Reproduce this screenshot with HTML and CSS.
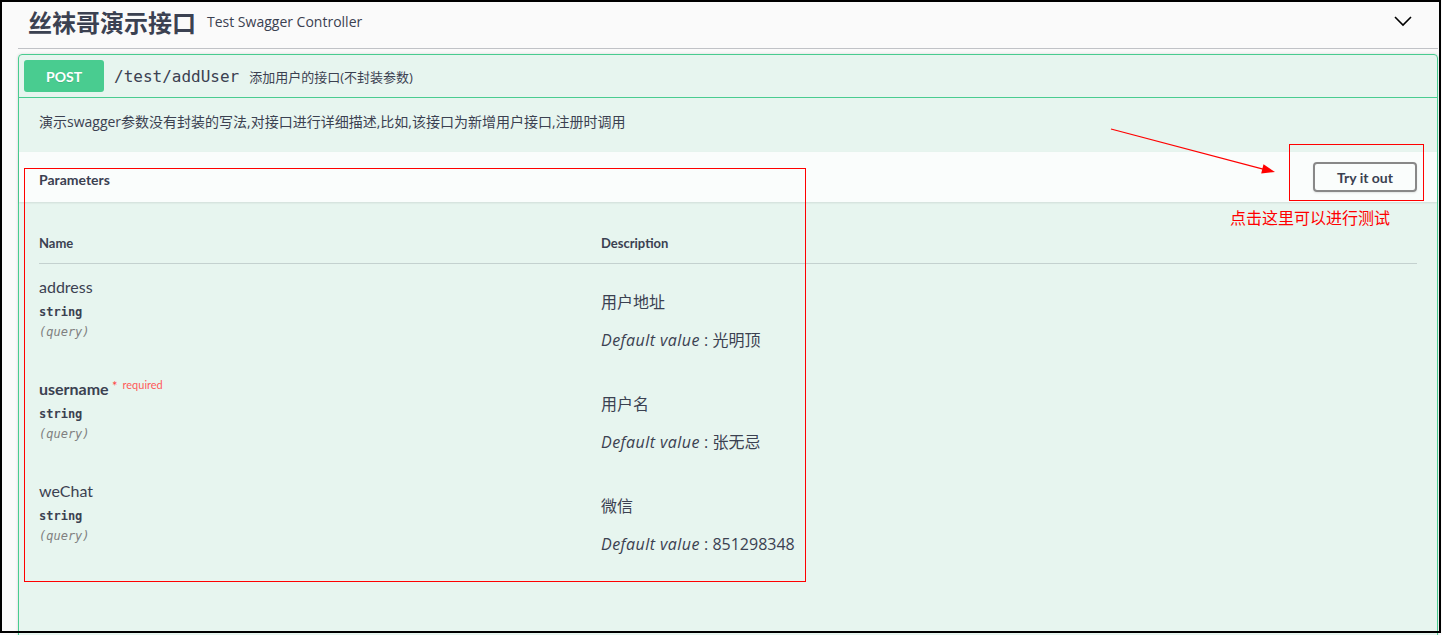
FILE: index.html
```html
<!DOCTYPE html>
<html lang="zh">
<head>
<meta charset="utf-8">
<title>Swagger</title>
<link rel="stylesheet" href="styles.css">
</head>
<body>
<div class="page">
  <div class="tag">
    <h3 class="tag-title">丝袜哥演示接口</h3>
    <small class="tag-desc">Test Swagger Controller</small>
    <svg class="chevron" viewBox="0 0 20 20" width="20" height="20"><path d="M2 6 L10 14 L18 6" fill="none" stroke="#000" stroke-width="1.6"/></svg>
  </div>
  <div class="opblock">
    <div class="summary">
      <span class="method">POST</span>
      <span class="path">/test/addUser</span>
      <span class="summary-desc">添加用户的接口(不封装参数)</span>
    </div>
    <div class="op-desc">演示swagger参数没有封装的写法,对接口进行详细描述,比如,该接口为新增用户接口,注册时调用</div>
    <div class="section-header">
      <h4 class="section-title">Parameters</h4>
      <button class="try">Try it out</button>
    </div>
    <div class="table">
      <div class="thead">
        <div>Name</div>
        <div>Description</div>
      </div>
      <div class="row">
        <div class="cell-name">
          <div class="pname">address</div>
          <div class="ptype">string</div>
          <div class="pin">(query)</div>
        </div>
        <div class="cell-desc">
          <p class="pdesc">用户地址</p>
          <p class="pdefault"><i>Default value</i> : 光明顶</p>
        </div>
      </div>
      <div class="row">
        <div class="cell-name">
          <div class="pname req">username<span class="star">&nbsp;*</span><span class="required">required</span></div>
          <div class="ptype">string</div>
          <div class="pin">(query)</div>
        </div>
        <div class="cell-desc">
          <p class="pdesc">用户名</p>
          <p class="pdefault"><i>Default value</i> : 张无忌</p>
        </div>
      </div>
      <div class="row">
        <div class="cell-name">
          <div class="pname">weChat</div>
          <div class="ptype">string</div>
          <div class="pin">(query)</div>
        </div>
        <div class="cell-desc">
          <p class="pdesc">微信</p>
          <p class="pdefault"><i>Default value</i> : 851298348</p>
        </div>
      </div>
    </div>
  </div>
</div>
<div class="frame"></div>
<svg class="annot" width="1442" height="635" viewBox="0 0 1442 635">
  <rect x="24.5" y="168.5" width="781" height="413" fill="none" stroke="#ff0000" stroke-width="1"/>
  <rect x="1289.5" y="144.5" width="134" height="56" fill="none" stroke="#ff0000" stroke-width="1"/>
  <line x1="1111" y1="129" x2="1264" y2="169.4" stroke="#ff0000" stroke-width="1.2"/>
  <polygon points="1275,172 1263.5,164.3 1261.2,173.4" fill="#ff0000"/>
</svg>
<div class="note">点击这里可以进行测试</div>
</body>
</html>
```
FILE: styles.css
```css
body {
  margin: 0;
  background: #fafafa;
  color: #3b4151;
  font-family: "Open Sans", "Noto Sans CJK SC", sans-serif;
}

.page {
  padding: 0 4px 0 18px;
}

.tag {
  display: flex;
  align-items: center;
  height: 42px;
  padding: 0 0 6px 10px;
  border-bottom: 1px solid rgba(59, 65, 81, 0.3);
}

.tag-title {
  margin: 0;
  font: 700 24px "Noto Sans CJK SC", sans-serif;
  color: #3b4151;
}

.tag-desc {
  margin-left: 11px;
  font: 400 14px "Open Sans", sans-serif;
}

.chevron {
  margin-left: auto;
  margin-right: 25px;
}

.opblock {
  margin-top: 5px;
  border: 1px solid #49cc90;
  border-radius: 4px;
  background: rgba(73, 204, 144, 0.1);
  box-shadow: 0 0 3px rgba(0, 0, 0, 0.15);
}

.summary {
  display: flex;
  align-items: center;
  padding: 5px;
  border-bottom: 1px solid #49cc90;
}

.method {
  display: flex;
  align-items: center;
  justify-content: center;
  width: 80px;
  height: 32px;
  border-radius: 3px;
  background: #49cc90;
  color: #fff;
  font: 700 14px "Lato", sans-serif;
  text-shadow: 0 1px 0 rgba(0, 0, 0, 0.1);
}

.path {
  padding: 0 10px;
  font: 400 16px "DejaVu Sans Mono", monospace;
}

.summary-desc {
  font: 400 13px "Open Sans", "Noto Sans CJK SC", sans-serif;
}

.op-desc {
  padding: 14px 20px 20px;
  font-size: 14px;
  line-height: 20px;
}

.section-header {
  display: flex;
  align-items: center;
  justify-content: space-between;
  padding: 10px 20px;
  background: rgba(255, 255, 255, 0.8);
  box-shadow: 0 1px 2px rgba(0, 0, 0, 0.1);
}

.section-title {
  margin: 0;
  padding-top: 4px;
  font: 700 14px "Lato", sans-serif;
}

.try {
  width: 104px;
  height: 30px;
  border: 2px solid #888;
  border-radius: 4px;
  background: transparent;
  color: #3b4151;
  font: 700 14px "Lato", sans-serif;
  box-shadow: 0 1px 2px rgba(0, 0, 0, 0.1);
}

.table {
  padding: 20px 20px 90px;
}

.thead {
  display: grid;
  grid-template-columns: 562px 1fr;
  padding: 13px 0 12px;
  border-bottom: 1px solid rgba(59, 65, 81, 0.2);
  font: 700 13px/16px "Lato", sans-serif;
}

.row {
  display: grid;
  grid-template-columns: 562px 1fr;
  height: 102px;
  box-sizing: border-box;
  padding-top: 11px;
}

.pname {
  font: 400 16px/24px "Lato", sans-serif;
}

.pname.req {
  font-weight: 700;
}

.star,
.required {
  position: relative;
  top: -6px;
  color: #ff4444;
  font: 400 11px "Lato", sans-serif;
}

.star {
  font-size: 13px;
  top: -4px;
}

.required {
  margin-left: 5px;
  color: #ff5a5a;
}

.ptype {
  margin-top: 4px;
  font: 700 12px/18px "DejaVu Sans Mono", monospace;
}

.pin {
  margin-top: 2px;
  font: italic 400 12px/18px "DejaVu Sans Mono", monospace;
  color: #808080;
}

.pdesc {
  margin: 16px 0 0;
  font: 400 16px/22px "Open Sans", "Noto Sans CJK SC", sans-serif;
}

.pdefault {
  margin: 16px 0 0;
  font: 400 16px/22px "Open Sans", "Noto Sans CJK SC", sans-serif;
}

.pdefault i {
  letter-spacing: 0.45px;
}

.frame {
  position: absolute;
  left: 0;
  top: 0;
  width: 1441px;
  height: 633px;
  box-sizing: border-box;
  border: 2px solid #000;
  pointer-events: none;
}

.annot {
  position: absolute;
  left: 0;
  top: 0;
  pointer-events: none;
}

.note {
  position: absolute;
  left: 1230px;
  top: 207px;
  color: #ff0000;
  font: 400 16px/20px "Noto Sans CJK SC", sans-serif;
}
```
